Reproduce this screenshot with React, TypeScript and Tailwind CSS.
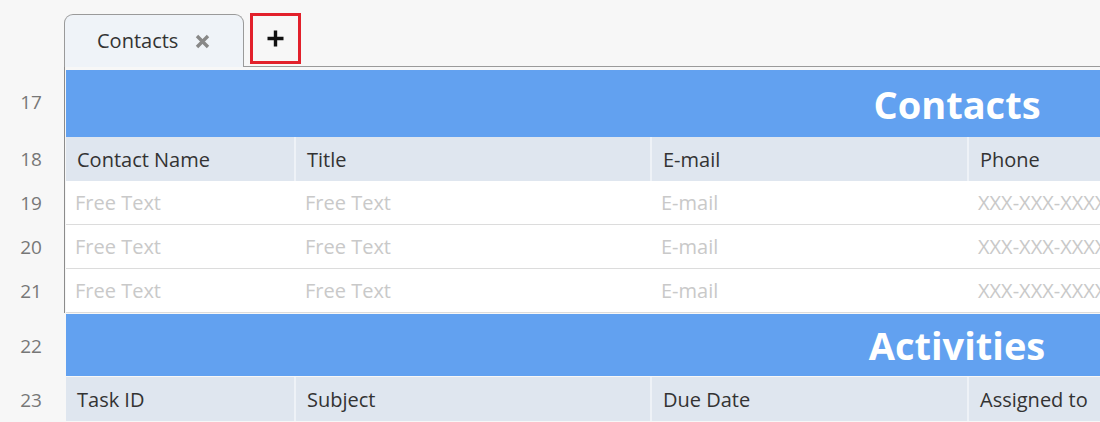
import React from "react";

const cols = [228, 354, 315, 400];

function HeaderRow({ labels }: { labels: string[] }) {
  return (
    <div className="flex h-[44px] gap-[2px] bg-[#eef2f7]">
      {labels.map((l, i) => (
        <div
          key={i}
          className="flex shrink-0 items-center pl-[11px] pt-[1px] text-[20px] text-[#333] bg-[#dfe6ef]"
          style={{ width: cols[i] }}
        >
          {l}
        </div>
      ))}
    </div>
  );
}

function DataRow({ labels }: { labels: string[] }) {
  return (
    <div className="flex h-[44px] gap-[2px] border-b border-[#dcdcdc] bg-white">
      {labels.map((l, i) => (
        <div
          key={i}
          className="flex shrink-0 items-center whitespace-nowrap pl-[9px] text-[20px] text-[#c9c9c9]"
          style={{ width: cols[i] }}
        >
          {l}
        </div>
      ))}
    </div>
  );
}

function Banner({ title, h }: { title: string; h: string }) {
  return (
    <div className={`flex items-center bg-[#62a1f0] ${h}`}>
      <div className="ml-[691px] w-[400px] shrink-0 text-center text-[38px] font-bold leading-none text-white">
        {title}
      </div>
    </div>
  );
}

function Num({ n, h }: { n: number; h: string }) {
  return (
    <div className={`flex w-[62px] items-center justify-center text-[19px] text-[#777] ${h}`}>
      {n}
    </div>
  );
}

export default function App() {
  return (
    <div
      className="h-[422px] w-[1100px] overflow-hidden bg-[#f7f7f7]"
      style={{ fontFamily: '"Open Sans", "Liberation Sans", sans-serif' }}
    >
      {/* tabs bar */}
      <div className="flex h-[67px] items-end pl-[64px]">
        <div className="flex h-[53px] w-[180px] items-center rounded-t-[9px] border border-b-0 border-[#9a9a9a] bg-[#eff3f8] pl-[32px] text-[20px] text-[#333]">
          <span>Contacts</span>
          <svg className="ml-[17px]" width="15" height="15" viewBox="0 0 15 15">
            <path d="M2 2l11 11M13 2L2 13" stroke="#888" strokeWidth="3.4" />
          </svg>
        </div>
        <div className="flex h-full flex-1 flex-col">
          <div className="flex flex-1 items-start">
            <div className="ml-[6px] mt-[13px] flex h-[51px] w-[51px] items-center justify-center border-[3px] border-[#e2202b]">
              <svg width="19" height="19" viewBox="0 0 19 19">
                <path d="M9.5 1.5v16M1.5 9.5h16" stroke="#111" strokeWidth="3.4" />
              </svg>
            </div>
          </div>
          <div className="h-[1px] bg-[#9a9a9a]" />
        </div>
      </div>

      <div className="flex">
        <div className="flex flex-col">
          <Num n={17} h="h-[70px]" />
          <Num n={18} h="h-[44px]" />
          <Num n={19} h="h-[44px]" />
          <Num n={20} h="h-[44px]" />
          <Num n={21} h="h-[45px]" />
          <Num n={22} h="h-[64px]" />
          <Num n={23} h="h-[44px]" />
        </div>
        <div className="ml-[2px] flex flex-1 flex-col overflow-hidden">
          <div className="flex flex-col border-l border-[#8c8c8c] pl-[1px]">
            <div className="h-[3px]" />
            <Banner title="Contacts" h="h-[67px]" />
            <HeaderRow labels={["Contact Name", "Title", "E-mail", "Phone"]} />
            <DataRow labels={["Free Text", "Free Text", "E-mail", "XXX-XXX-XXXX"]} />
            <DataRow labels={["Free Text", "Free Text", "E-mail", "XXX-XXX-XXXX"]} />
            <DataRow labels={["Free Text", "Free Text", "E-mail", "XXX-XXX-XXXX"]} />
          </div>
          <div className="pl-[2px]">
            <div className="h-[1px]" />
            <Banner title="Activities" h="h-[62px]" />
            <div className="h-[1px]" />
            <HeaderRow labels={["Task ID", "Subject", "Due Date", "Assigned to"]} />
          </div>
        </div>
      </div>
    </div>
  );
}
